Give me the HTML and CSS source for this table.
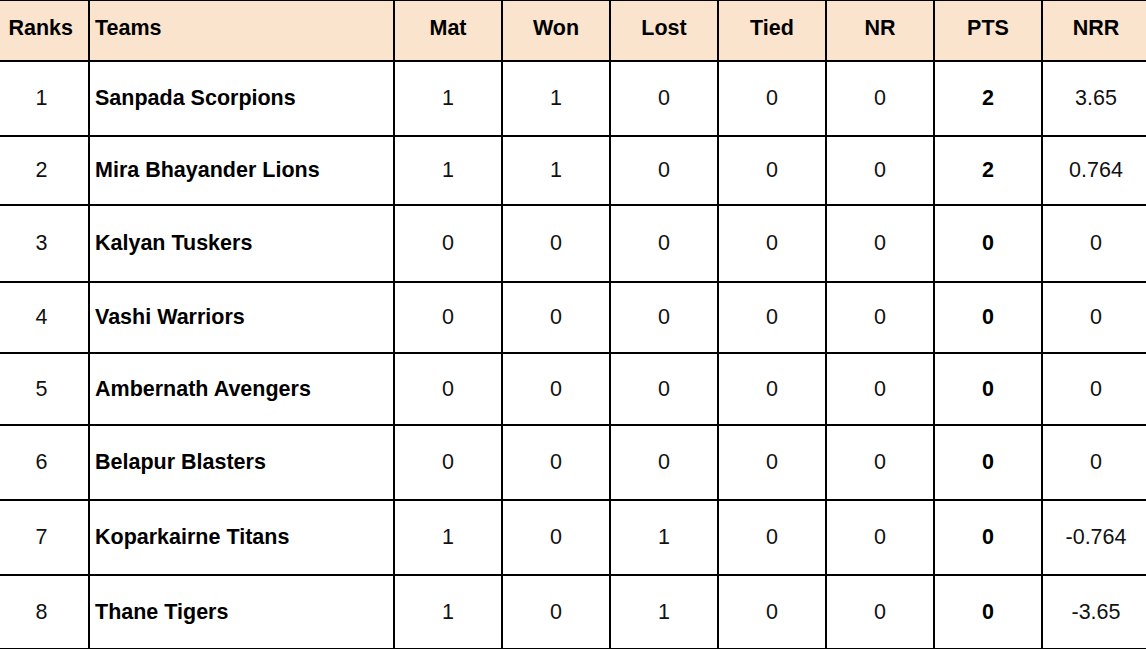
FILE: index.html
```html
<!DOCTYPE html>
<html>
<head>
<meta charset="utf-8">
<link rel="stylesheet" href="styles.css">
</head>
<body>
<table class="standings">
  <colgroup>
    <col class="c-rank"><col class="c-team"><col class="c-num"><col class="c-num"><col class="c-num"><col class="c-num"><col class="c-num"><col class="c-num"><col class="c-num">
  </colgroup>
  <thead>
    <tr>
      <th>Ranks</th><th class="team">Teams</th><th>Mat</th><th>Won</th><th>Lost</th><th>Tied</th><th>NR</th><th>PTS</th><th>NRR</th>
    </tr>
  </thead>
  <tbody>
    <tr><td>1</td><td class="team">Sanpada Scorpions</td><td>1</td><td>1</td><td>0</td><td>0</td><td>0</td><td class="pts">2</td><td>3.65</td></tr>
    <tr><td>2</td><td class="team">Mira Bhayander Lions</td><td>1</td><td>1</td><td>0</td><td>0</td><td>0</td><td class="pts">2</td><td>0.764</td></tr>
    <tr><td>3</td><td class="team">Kalyan Tuskers</td><td>0</td><td>0</td><td>0</td><td>0</td><td>0</td><td class="pts">0</td><td>0</td></tr>
    <tr><td>4</td><td class="team">Vashi Warriors</td><td>0</td><td>0</td><td>0</td><td>0</td><td>0</td><td class="pts">0</td><td>0</td></tr>
    <tr><td>5</td><td class="team">Ambernath Avengers</td><td>0</td><td>0</td><td>0</td><td>0</td><td>0</td><td class="pts">0</td><td>0</td></tr>
    <tr><td>6</td><td class="team">Belapur Blasters</td><td>0</td><td>0</td><td>0</td><td>0</td><td>0</td><td class="pts">0</td><td>0</td></tr>
    <tr><td>7</td><td class="team">Koparkairne Titans</td><td>1</td><td>0</td><td>1</td><td>0</td><td>0</td><td class="pts">0</td><td>-0.764</td></tr>
    <tr><td>8</td><td class="team">Thane Tigers</td><td>1</td><td>0</td><td>1</td><td>0</td><td>0</td><td class="pts">0</td><td>-3.65</td></tr>
  </tbody>
</table>
</body>
</html>
```
FILE: styles.css
```css
html, body {
  margin: 0;
  padding: 0;
  background: #ffffff;
  overflow: hidden;
}

.standings {
  border-collapse: collapse;
  table-layout: fixed;
  width: 1158px;
  margin: -1px 0 0 -9px;
  font-family: "Liberation Sans", Arial, sans-serif;
  font-size: 21.5px;
  color: #111;
}

.c-rank { width: 97px; }
.c-team { width: 305px; }
.c-num { width: 108px; }

.standings th,
.standings td {
  border: 2px solid #000;
  padding: 0 5px;
  text-align: center;
  vertical-align: middle;
  box-sizing: border-box;
}

.standings th {
  background: #fbe4cd;
  font-weight: bold;
  color: #000;
  height: 61px;
  padding-bottom: 4px;
}

.standings th:first-child {
  text-align: right;
  padding-right: 15px;
}

.standings td:first-child {
  padding-left: 7px;
}

.standings .team {
  text-align: left;
  font-weight: bold;
  color: #000;
}

.standings .pts {
  font-weight: bold;
  color: #000;
}

.standings tbody tr:nth-child(1) td { height: 75px; }
.standings tbody tr:nth-child(2) td { height: 69px; }
.standings tbody tr:nth-child(3) td { height: 77px; }
.standings tbody tr:nth-child(4) td { height: 71px; }
.standings tbody tr:nth-child(5) td { height: 72px; }
.standings tbody tr:nth-child(6) td { height: 75px; }
.standings tbody tr:nth-child(7) td { height: 75px; }
.standings tbody tr:nth-child(8) td { height: 74px; }
```
